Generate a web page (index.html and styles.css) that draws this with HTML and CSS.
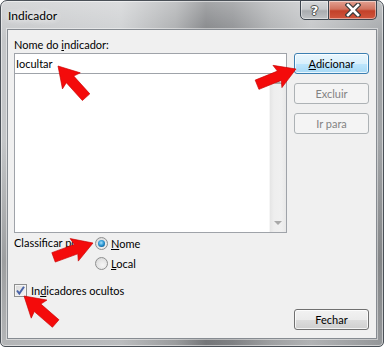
FILE: index.html
```html
<!DOCTYPE html>
<html lang="pt">
<head>
    <meta charset="UTF-8">
    <title>Indicador</title>
    <link rel="stylesheet" href="styles.css">
</head>
<body>
    <div class="window">
        <!-- Title bar -->
        <div class="titlebar">
            <span class="title">Indicador</span>
            <div class="caption-buttons">
                <div class="cap-btn cap-help">?</div>
                <div class="cap-btn cap-close">
                    <svg width="16" height="14" viewBox="0 0 16 14">
                        <path d="M3 2 L13 12 M13 2 L3 12" stroke="#3b3b3b" stroke-width="5" stroke-linecap="square" fill="none"/>
                        <path d="M3 2 L13 12 M13 2 L3 12" stroke="#ffffff" stroke-width="2.6" stroke-linecap="square" fill="none"/>
                    </svg>
                </div>
            </div>
        </div>

        <!-- Dialog body -->
        <div class="client">
            <div class="main">
                <div class="left">
                    <div class="label">Nome do <u>i</u>ndicador:</div>
                    <input class="name-box" type="text" value="Iocultar">
                    <div class="list">
                        <div class="list-items"></div>
                        <div class="scrollbar">
                            <span class="sb-arrow up"></span>
                            <span class="sb-arrow down"></span>
                        </div>
                    </div>
                </div>
                <div class="buttons">
                    <button class="btn default"><u>A</u>dicionar</button>
                    <button class="btn" disabled>Excluir</button>
                    <button class="btn" disabled>Ir para</button>
                </div>
            </div>

            <div class="sort">
                <div class="sort-label">Classificar <u>p</u>or:</div>
                <div class="radios">
                    <label class="radio"><span class="dot checked"></span><span><u>N</u>ome</span></label>
                    <label class="radio"><span class="dot"></span><span><u>L</u>ocal</span></label>
                </div>
            </div>

            <label class="check-row">
                <span class="box">
                    <svg width="11" height="11" viewBox="0 0 11 11">
                        <path d="M2 5.5 L4.3 8.5 L9 1.8" stroke="#4a64a8" stroke-width="2" fill="none"/>
                    </svg>
                </span>
                <span>In<u>d</u>icadores ocultos</span>
            </label>

            <div class="close-row">
                <button class="btn">Fechar</button>
            </div>
        </div>

        <!-- Red annotation arrows -->
        <svg class="arrows" width="384" height="347" viewBox="0 0 384 347">
            <defs>
                <polygon id="arrow" points="0,0 -20,-12 -18,-5 -42,-5 -42,5 -18,5 -20,12"/>
            </defs>
            <use href="#arrow" transform="translate(58 66) rotate(228)"/>
            <use href="#arrow" transform="translate(296 69) rotate(-22)"/>
            <use href="#arrow" transform="translate(93 243) rotate(-20)"/>
            <use href="#arrow" transform="translate(24 296) rotate(221)"/>
        </svg>
    </div>
</body>
</html>
```

FILE: styles.css
```css
* {
    box-sizing: border-box;
}

body {
    margin: 0;
    width: 384px;
    height: 347px;
    overflow: hidden;
    background: #fff;
    font-family: Lato, "Liberation Sans", sans-serif;
    font-size: 12px;
    color: #000;
}

.window {
    position: relative;
    width: 384px;
    height: 347px;
    display: flex;
    flex-direction: column;
    padding: 0 6px 7px 6px;
    border: 1px solid #4a5057;
    border-radius: 7px 7px 5px 5px;
    background:
        linear-gradient(to bottom, rgba(255, 255, 255, 0.3), rgba(255, 255, 255, 0) 40px),
        linear-gradient(to bottom, rgba(0, 0, 0, 0) 140px, rgba(40, 40, 40, 0.25) 260px, rgba(40, 40, 40, 0.1) 347px),
        linear-gradient(to right, #c4c6c8 0, #cdcfd1 120px, #a8aaac 175px, #7e8083 205px, #8a8c8f 232px, #adafb1 270px, #c2c4c6 310px, #a0a3a6 384px);
    box-shadow: inset 0 0 0 1px rgba(255, 255, 255, 0.5);
}

/* title bar */
.titlebar {
    height: 28px;
    display: flex;
    justify-content: space-between;
    align-items: flex-start;
}

.title {
    margin: 8px 0 0 1px;
    line-height: 14px;
    text-shadow: 0 0 6px #fff, 0 0 10px rgba(255, 255, 255, 0.8);
}

.caption-buttons {
    display: flex;
    margin-top: -1px;
}

.cap-btn {
    height: 20px;
    display: flex;
    justify-content: center;
    align-items: center;
    border: 1px solid #3d454f;
    box-shadow: inset 0 0 0 1px rgba(255, 255, 255, 0.45);
}

.cap-help {
    width: 29px;
    border-radius: 0 0 0 5px;
    background: linear-gradient(#d6d8da, #c5c8cb 45%, #a9acb0 55%, #bfc2c5);
    color: #fff;
    font-family: "DejaVu Sans", sans-serif;
    font-weight: bold;
    font-size: 13px;
    text-shadow: 0 0 1px #333, 1px 0 0 #555, -1px 0 0 #555, 0 1px 0 #555, 0 -1px 0 #555;
}

.cap-close {
    width: 48px;
    border-left: none;
    border-radius: 0 0 5px 0;
    background: linear-gradient(#e3a192, #d1735f 45%, #c3412a 55%, #d0563e);
}

/* client area */
.client {
    flex: 1;
    background: #f0f0f0;
    border: 1px solid #868b91;
    padding: 7px 7px 6px 6px;
    box-shadow: 0 0 0 1px rgba(255, 255, 255, 0.45);
    font-size: 11px;
}

.main {
    display: grid;
    grid-template-columns: 273px 75px;
    column-gap: 7px;
}

.label {
    height: 16px;
    line-height: 16px;
}

.name-box {
    display: block;
    width: 100%;
    height: 21px;
    margin: 0;
    padding: 0 0 0 1px;
    border: 1px solid #9fa3a9;
    background: #fff;
    font: inherit;
    color: #000;
    outline: none;
}

.list {
    height: 159px;
    display: flex;
    border: 1px solid #9fa3a9;
    border-top: none;
    background: #fff;
}

.list-items {
    flex: 1;
}

.scrollbar {
    width: 17px;
    display: flex;
    flex-direction: column;
    justify-content: space-between;
    align-items: center;
    padding: 6px 0 7px 0;
    background: linear-gradient(to right, #e5e5e5, #eeeeee 25%, #f0f0f0 70%, #e8e8e8);
    border-left: 1px solid #f6f6f6;
}

.sb-arrow {
    width: 0;
    height: 0;
    border-left: 4px solid transparent;
    border-right: 4px solid transparent;
}

.sb-arrow.up {
    border-bottom: 4px solid #a8a8a8;
}

.sb-arrow.down {
    border-top: 4px solid #a8a8a8;
}

.buttons {
    display: flex;
    flex-direction: column;
    gap: 9px;
    padding-top: 16px;
}

.btn {
    width: 75px;
    height: 21px;
    margin: 0;
    padding: 0;
    border: 1px solid #707070;
    border-radius: 3px;
    background: linear-gradient(#f2f2f2 0, #ebebeb 50%, #dddddd 51%, #cfcfcf 100%);
    box-shadow: inset 0 0 0 1px rgba(255, 255, 255, 0.75);
    font: inherit;
    color: #000;
}

.btn.default {
    border-color: #3c7fb1;
    background: linear-gradient(#eaf6fd 0, #d9f0fc 50%, #bee6fd 51%, #a7d9f5 100%);
}

.btn:disabled {
    border-color: #adb2b5;
    background: #f4f4f4;
    box-shadow: none;
    color: #838383;
}

/* sort radios */
.sort {
    display: flex;
    margin-top: 2px;
}

.sort-label {
    width: 81px;
    line-height: 16px;
}

.radios {
    display: flex;
    flex-direction: column;
    gap: 4px;
}

.radio {
    height: 16px;
    display: flex;
    align-items: center;
    gap: 3px;
}

.dot {
    position: relative;
    width: 13px;
    height: 13px;
    border-radius: 50%;
    border: 1px solid #8e8f8f;
    background: radial-gradient(circle at 60% 65%, #f6f6f6 0, #e2e2e2 60%, #d0d0d0 100%);
}

.dot.checked::after {
    content: "";
    position: absolute;
    left: 2px;
    top: 2px;
    width: 7px;
    height: 7px;
    border-radius: 50%;
    background: radial-gradient(circle at 45% 40%, #a8e1fb 0, #2f9ad6 45%, #0b5a91 80%, #08385e 100%);
}

/* hidden bookmarks checkbox */
.check-row {
    height: 16px;
    display: flex;
    align-items: center;
    gap: 4px;
    margin-top: 11px;
}

.box {
    width: 13px;
    height: 13px;
    display: flex;
    justify-content: center;
    align-items: center;
    border: 1px solid #8e8f8f;
    background: linear-gradient(135deg, #d9d9d9, #f7f7f7);
    box-shadow: inset 0 0 0 1px #f4f4f4;
}

.close-row {
    display: flex;
    justify-content: flex-end;
    margin-top: 11px;
}

/* annotation overlay */
.arrows {
    position: absolute;
    left: -1px;
    top: -1px;
    fill: #f40b0b;
    stroke: #c80000;
    stroke-width: 0.6;
    pointer-events: none;
}
```
